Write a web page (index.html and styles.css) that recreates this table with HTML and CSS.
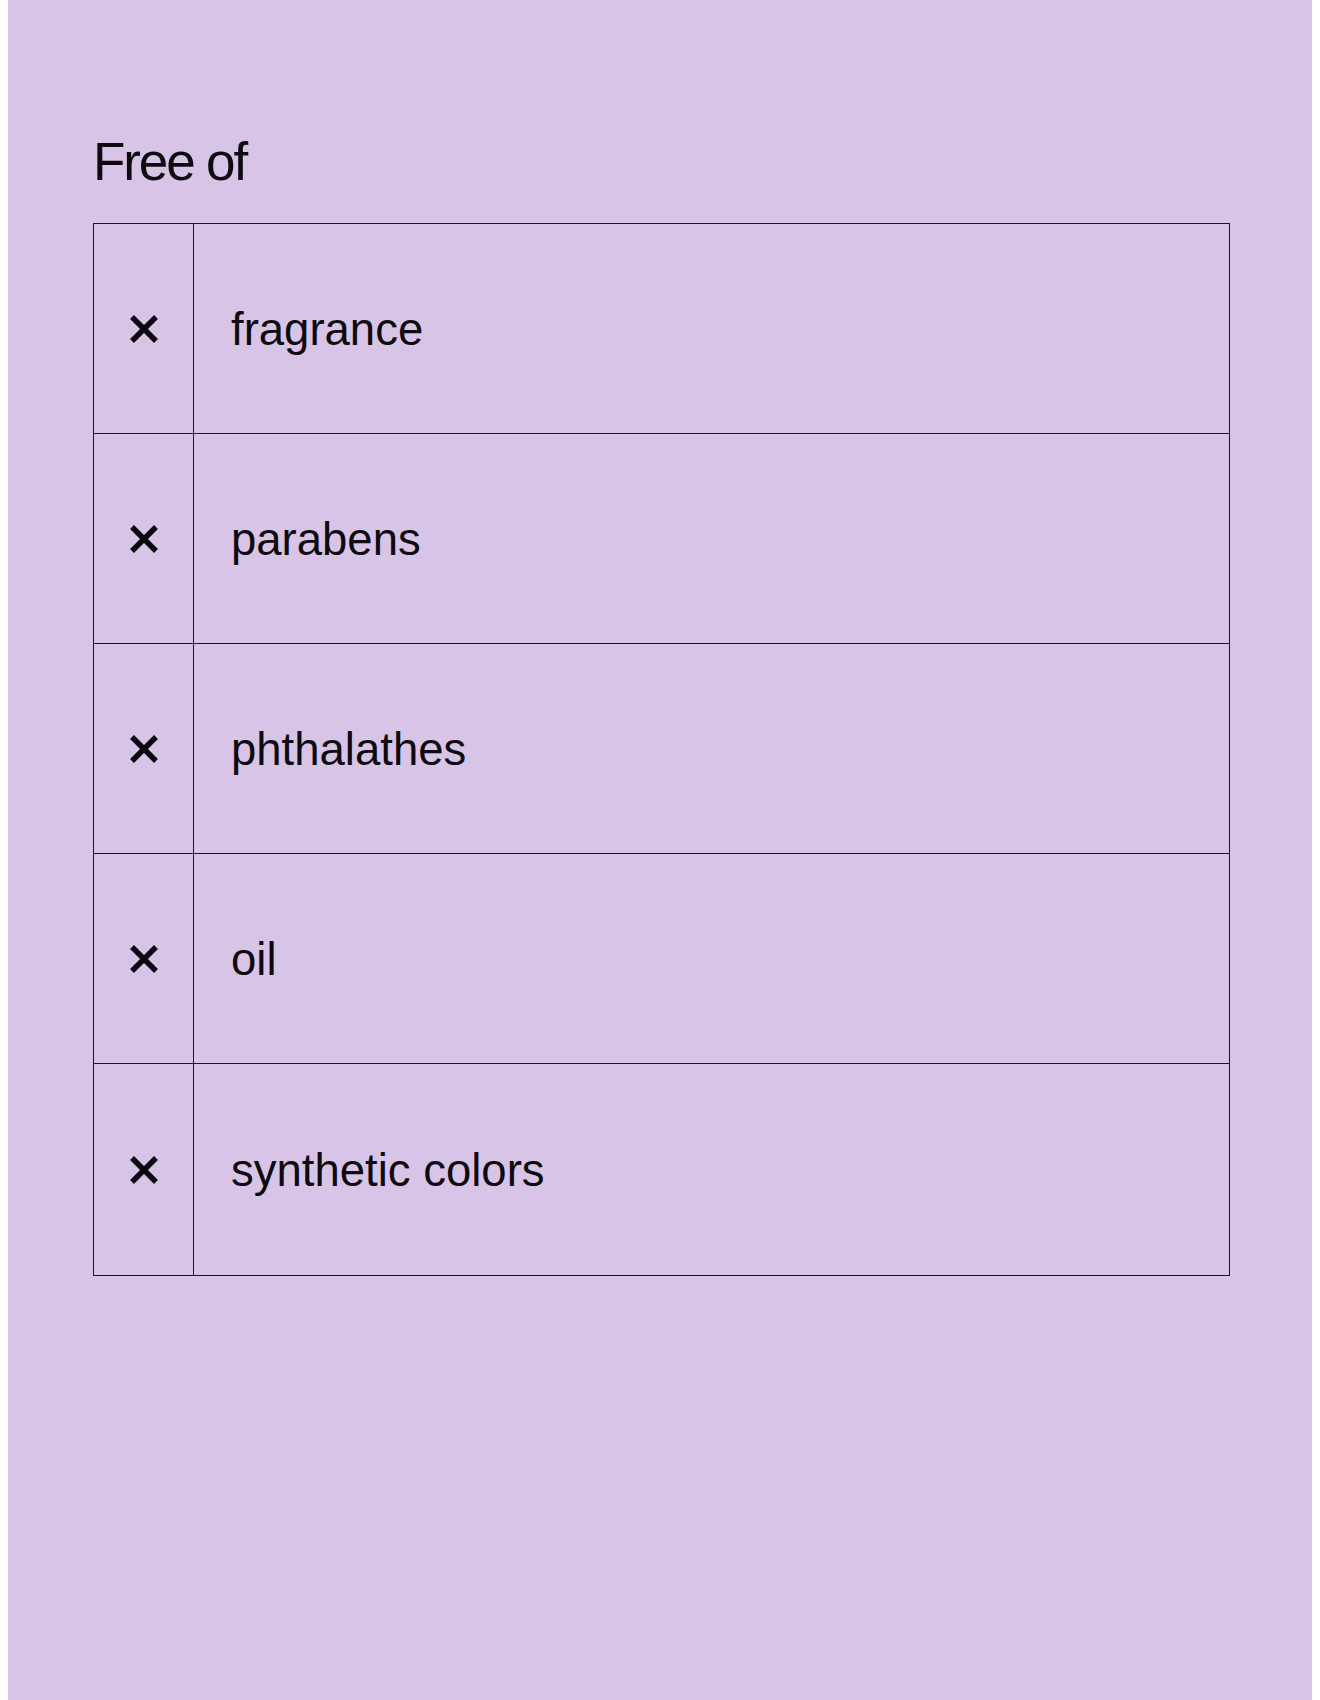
FILE: index.html
```html
<!DOCTYPE html>
<html lang="en">
<head>
<meta charset="utf-8">
<title>Free of</title>
<link rel="stylesheet" href="styles.css">
</head>
<body>
<main class="panel">
  <h2 class="title">Free of</h2>
  <div class="list">
    <div class="row">
      <div class="mark"><svg viewBox="0 0 32 32" width="32" height="32"><path d="M4 4 L28 28 M28 4 L4 28"/></svg></div>
      <div class="label">fragrance</div>
    </div>
    <div class="row">
      <div class="mark"><svg viewBox="0 0 32 32" width="32" height="32"><path d="M4 4 L28 28 M28 4 L4 28"/></svg></div>
      <div class="label">parabens</div>
    </div>
    <div class="row">
      <div class="mark"><svg viewBox="0 0 32 32" width="32" height="32"><path d="M4 4 L28 28 M28 4 L4 28"/></svg></div>
      <div class="label">phthalathes</div>
    </div>
    <div class="row">
      <div class="mark"><svg viewBox="0 0 32 32" width="32" height="32"><path d="M4 4 L28 28 M28 4 L4 28"/></svg></div>
      <div class="label">oil</div>
    </div>
    <div class="row">
      <div class="mark"><svg viewBox="0 0 32 32" width="32" height="32"><path d="M4 4 L28 28 M28 4 L4 28"/></svg></div>
      <div class="label">synthetic colors</div>
    </div>
  </div>
</main>
</body>
</html>
```
FILE: styles.css
```css
html, body {
  margin: 0;
  padding: 0;
  background: #ffffff;
}
body {
  padding: 0 8px;
  font-family: "Liberation Sans", Arial, sans-serif;
  color: #0d0a10;
}
.panel {
  box-sizing: border-box;
  height: 1700px;
  background: #d8c4e6;
  padding: 132px 82px 0 85px;
}
.title {
  margin: 0 0 31px 0;
  font-size: 53px;
  line-height: 60px;
  font-weight: 400;
  letter-spacing: -0.04em;
}
.list {
  border: 1px solid #1b1424;
}
.row {
  display: grid;
  grid-template-columns: 100px 1fr;
  height: 209px;
  border-bottom: 1px solid #1b1424;
}
.row:last-child {
  border-bottom: none;
  height: 211px;
}
.mark {
  border-right: 1px solid #1b1424;
  display: flex;
  align-items: center;
  justify-content: center;
}
.mark svg {
  display: block;
}
.mark path {
  stroke: #0a0710;
  stroke-width: 5.5;
  fill: none;
  stroke-linecap: butt;
}
.label {
  display: flex;
  align-items: center;
  padding: 2px 0 0 37px;
  font-size: 45.5px;
}
```
